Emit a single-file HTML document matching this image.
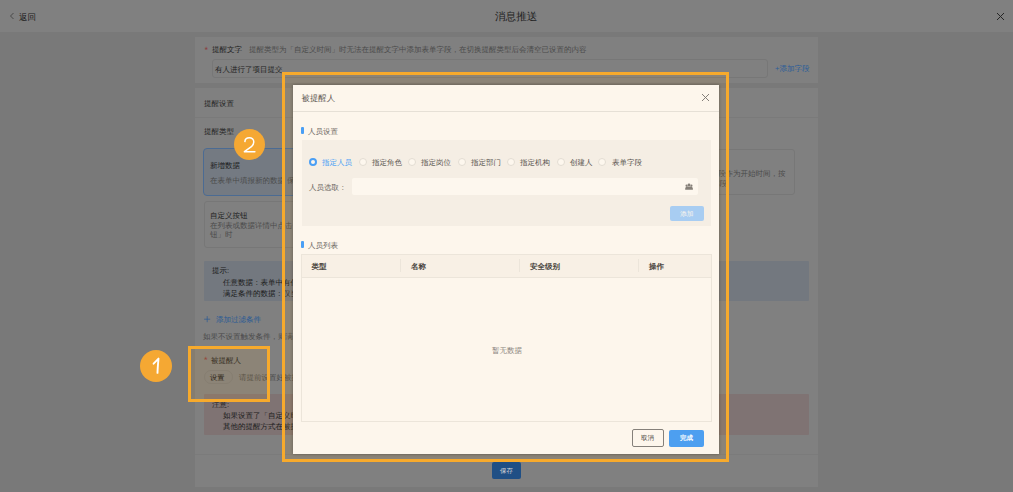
<!DOCTYPE html>
<html><head><meta charset="utf-8">
<style>
*{margin:0;padding:0;box-sizing:border-box}
html,body{width:1013px;height:492px;overflow:hidden;background:#797979;font-family:"Liberation Sans",sans-serif;text-rendering:geometricPrecision}
.a{position:absolute}
.t{position:absolute;white-space:nowrap;line-height:10px;height:10px;margin-top:1px}
.s{font-size:7.5px}
</style></head><body>
<!-- header -->
<div class="a" style="left:0;top:0;width:1013px;height:32px;background:#808080"></div>
<svg class="a" style="left:9px;top:12px" width="7" height="8" viewBox="0 0 7 8"><path d="M4.5 1 L1.5 4 L4.5 7" fill="none" stroke="#3a3a3a" stroke-width="0.8"/></svg>
<div class="t" style="left:19px;top:11px;font-size:8.5px;color:#1a1a1a">返回</div>
<div class="t" style="left:495px;top:11px;font-size:10.6px;color:#1e1e1e">消息推送</div>
<svg class="a" style="left:996px;top:12px" width="9" height="9" viewBox="0 0 9 9"><path d="M1 1 L8 8 M8 1 L1 8" stroke="#262626" stroke-width="1"/></svg>

<!-- card 1 -->
<div class="a" style="left:195px;top:37px;width:623px;height:46px;background:#808080"></div>
<div class="t" style="left:204.5px;top:44px;font-size:9px;color:#8c3a3a">*</div>
<div class="t s" style="left:212px;top:44px;color:#1e1e1e">提醒文字</div>
<div class="t s" style="left:249px;top:44px;color:#4a4a4a">提醒类型为「自定义时间」时无法在提醒文字中添加表单字段，在切换提醒类型后会清空已设置的内容</div>
<div class="a" style="left:212px;top:59px;width:556px;height:19px;border:1px solid #777777;border-radius:3px"></div>
<div class="t s" style="left:215px;top:64px;color:#1e1e1e">有人进行了项目提交</div>
<div class="t s" style="left:775px;top:63px;color:#2a5d9a">+添加字段</div>

<!-- card 2 -->
<div class="a" style="left:195px;top:88px;width:623px;height:399px;background:#808080"></div>
<div class="a" style="left:195px;top:117px;width:623px;height:1px;background:#7a7a7a"></div>
<div class="t s" style="left:204px;top:98px;color:#1e1e1e">提醒设置</div>
<div class="t s" style="left:204px;top:126px;color:#1e1e1e">提醒类型</div>

<!-- type cards -->
<div class="a" style="left:203px;top:148px;width:192px;height:48px;background:#747a82;border:1px solid #4b6b93;border-radius:4px"></div>
<div class="t s" style="left:210px;top:160px;color:#1a1a1a">新增数据</div>
<div class="t s" style="left:210px;top:175px;color:#4a4a4a">在表单中填报新的数据 保存后</div>
<div class="a" style="left:403px;top:148px;width:192px;height:47px;border:1px solid #777777;border-radius:3px"></div>
<div class="a" style="left:602px;top:149px;width:193px;height:46px;border:1px solid #777777;border-radius:3px"></div>
<div class="t s" style="left:658px;top:168px;color:#4a4a4a">以表单中的日期字段作为开始时间，按</div>
<div class="t s" style="left:712px;top:178px;color:#4a4a4a">字段</div>

<div class="a" style="left:204px;top:201px;width:191px;height:47px;border:1px solid #777777;border-radius:3px"></div>
<div class="t s" style="left:210px;top:210px;color:#1a1a1a">自定义按钮</div>
<div class="t s" style="left:210px;top:220px;color:#4a4a4a">在列表或数据详情中点击「按</div>
<div class="t s" style="left:210px;top:229px;color:#4a4a4a">钮」时</div>

<div class="a" style="left:204px;top:260.5px;width:605px;height:40.5px;background:#73787f;border-radius:1px"></div>
<div class="t s" style="left:212px;top:265px;color:#1a1a1a">提示:</div>
<div class="t s" style="left:223px;top:277px;color:#1a1a1a">任意数据：表单中有任意数据</div>
<div class="t s" style="left:223px;top:288px;color:#1a1a1a">满足条件的数据：仅当数据</div>

<svg class="a" style="left:203px;top:315px" width="8" height="8" viewBox="0 0 8 8"><path d="M1.1 4.2 H7.2 M4.2 1.1 V7.2" stroke="#2a5a95" stroke-width="0.7"/></svg>
<div class="t s" style="left:216px;top:314px;color:#2a5a95">添加过滤条件</div>
<div class="t s" style="left:203px;top:331px;color:#4a4a4a">如果不设置触发条件，则满足</div>

<div class="t" style="left:204px;top:354px;font-size:9px;color:#8c3a3a">*</div>
<div class="t s" style="left:211px;top:355px;color:#1e1e1e">被提醒人</div>
<div class="a" style="left:203.5px;top:369.5px;width:29px;height:14px;border:1px solid #7a7a7a;border-radius:7px"></div>
<div class="t" style="left:210px;top:372px;font-size:7.2px;color:#101010">设置</div>
<div class="t s" style="left:239px;top:372px;color:#4a4a4a">请提前设置好被提醒人</div>

<div class="a" style="left:204px;top:394px;width:605px;height:40.5px;background:#7f7373;border-radius:1px"></div>
<div class="t s" style="left:212px;top:399px;color:#1a1a1a">注意:</div>
<div class="t s" style="left:223px;top:410px;color:#1a1a1a">如果设置了「自定义时间」</div>
<div class="t s" style="left:223px;top:421px;color:#1a1a1a">其他的提醒方式在被提醒人</div>

<div class="a" style="left:195px;top:454px;width:623px;height:1px;background:#7b7b7b"></div>
<div class="a" style="left:492px;top:462px;width:29px;height:17px;background:#1f4f85;border-radius:2px"></div>
<div class="t" style="left:500px;top:466px;font-size:6.5px;color:#d8d8d8">保存</div>

<!-- annotation 1 -->
<div class="a" style="left:188px;top:346px;width:82px;height:56px;border:3px solid #f7aa2c;background:rgba(245,166,35,0.1)"></div>
<div class="a" style="left:140px;top:350px;width:32px;height:32px;border-radius:50%;background:#f5a833"></div>
<svg class="a" style="left:140px;top:350px" width="32" height="32" viewBox="0 0 32 32"><path d="M13.6 13.7 L18.5 8.6 C18.1 13 17.6 18 17.5 22.9" fill="none" stroke="#fff" stroke-width="1.9" stroke-linecap="round" stroke-linejoin="round"/></svg>

<!-- annotation 2 -->
<div class="a" style="left:282px;top:72px;width:447px;height:390px;border:3px solid #f7aa2c;background:rgba(245,166,35,0.1)"></div>

<!-- modal -->
<div class="a" style="left:293px;top:85px;width:426px;height:369px;background:#fdf6ec;box-shadow:0 0 3px rgba(0,0,0,0.3)"></div>
<div class="t" style="left:301.5px;top:92px;font-size:8.4px;color:#5a5550">被提醒人</div>
<svg class="a" style="left:701px;top:93px" width="9" height="9" viewBox="0 0 9 9"><path d="M1 1 L8 8 M8 1 L1 8" stroke="#77736d" stroke-width="0.9"/></svg>
<div class="a" style="left:293px;top:111px;width:426px;height:1px;background:#e6e0d6"></div>

<div class="a" style="left:301px;top:127px;width:2.5px;height:7px;background:#4a9ff5;border-radius:1px"></div>
<div class="t s" style="left:308px;top:126px;color:#6a6560">人员设置</div>

<div class="a" style="left:302px;top:140px;width:409px;height:86px;background:#f5eee4"></div>
<!-- radios -->
<div class="a" style="left:309px;top:158px;width:8px;height:8px;border-radius:50%;border:2.5px solid #4a9ff5;background:#fdf6ec"></div>
<div class="t s" style="left:322px;top:157px;color:#4a9ff5">指定人员</div>
<div class="a" style="left:358.5px;top:158px;width:8px;height:8px;border-radius:50%;border:1px solid #e3ddd3;background:#fdf7ee"></div>
<div class="t s" style="left:372px;top:157px;color:#5a5550">指定角色</div>
<div class="a" style="left:408px;top:158px;width:8px;height:8px;border-radius:50%;border:1px solid #e3ddd3;background:#fdf7ee"></div>
<div class="t s" style="left:421px;top:157px;color:#5a5550">指定岗位</div>
<div class="a" style="left:457.5px;top:158px;width:8px;height:8px;border-radius:50%;border:1px solid #e3ddd3;background:#fdf7ee"></div>
<div class="t s" style="left:471px;top:157px;color:#5a5550">指定部门</div>
<div class="a" style="left:507px;top:158px;width:8px;height:8px;border-radius:50%;border:1px solid #e3ddd3;background:#fdf7ee"></div>
<div class="t s" style="left:520px;top:157px;color:#5a5550">指定机构</div>
<div class="a" style="left:557px;top:158px;width:8px;height:8px;border-radius:50%;border:1px solid #e3ddd3;background:#fdf7ee"></div>
<div class="t s" style="left:570px;top:157px;color:#5a5550">创建人</div>
<div class="a" style="left:598px;top:158px;width:8px;height:8px;border-radius:50%;border:1px solid #e3ddd3;background:#fdf7ee"></div>
<div class="t s" style="left:612px;top:157px;color:#5a5550">表单字段</div>

<div class="t s" style="left:309px;top:182px;color:#6a6560">人员选取：</div>
<div class="a" style="left:352px;top:178px;width:346px;height:17px;background:#fdf7ee;border-radius:2px"></div>
<svg class="a" style="left:680px;top:178px" width="18" height="18" viewBox="0 0 18 18"><g fill="#857f78"><circle cx="9" cy="6.9" r="1.4"/><circle cx="6.6" cy="7.7" r="1.1"/><circle cx="11.4" cy="7.7" r="1.1"/><path d="M5.2 11.8 Q5 8.8 7 8.6 L11 8.6 Q13 8.8 12.9 11.8 Z"/></g></svg>

<div class="a" style="left:670px;top:206px;width:34px;height:15px;background:#a8cdf2;border-radius:2px"></div>
<div class="t" style="left:680px;top:209px;font-size:6.7px;color:#fdf6ec">添加</div>

<div class="a" style="left:301px;top:241px;width:2.5px;height:7px;background:#4a9ff5;border-radius:1px"></div>
<div class="t s" style="left:308px;top:240px;color:#6a6560">人员列表</div>

<!-- table -->
<div class="a" style="left:301px;top:254px;width:411px;height:168px;border:1px solid #ece5da;background:#fdf6ec"></div>
<div class="a" style="left:302px;top:255px;width:409px;height:22px;background:#f8f0e5"></div>
<div class="a" style="left:302px;top:277px;width:409px;height:1px;background:#ece5da"></div>
<div class="a" style="left:400px;top:259px;width:1px;height:13px;background:#ece5da"></div>
<div class="a" style="left:519px;top:259px;width:1px;height:13px;background:#ece5da"></div>
<div class="a" style="left:638px;top:259px;width:1px;height:13px;background:#ece5da"></div>
<div class="t s" style="left:311.5px;top:261px;color:#4a4540;font-weight:bold">类型</div>
<div class="t s" style="left:411px;top:261px;color:#4a4540;font-weight:bold">名称</div>
<div class="t s" style="left:530px;top:261px;color:#4a4540;font-weight:bold">安全级别</div>
<div class="t s" style="left:649px;top:261px;color:#4a4540;font-weight:bold">操作</div>
<div class="t s" style="left:492px;top:344.5px;color:#8a8580">暂无数据</div>

<!-- footer buttons -->
<div class="a" style="left:632px;top:429px;width:32px;height:18px;border:1px solid #85807a;border-radius:2px;background:#fdf6ec"></div>
<div class="t" style="left:641px;top:433px;font-size:6.5px;color:#4a4540">取消</div>
<div class="a" style="left:669px;top:430px;width:35px;height:17px;background:#4d9ff0;border-radius:2px"></div>
<div class="t" style="left:680px;top:433px;font-size:6.5px;color:#ffffff;font-weight:bold">完成</div>

<!-- circle 2 -->
<div class="a" style="left:233.5px;top:129px;width:31px;height:31px;border-radius:50%;background:#f5a833"></div>
<svg class="a" style="left:233.5px;top:129px" width="31" height="31" viewBox="0 0 31 31"><path d="M10.9 12.6 C11 10.2 12.9 8.7 15.3 8.7 C17.9 8.7 19.8 10.5 19.8 13 C19.8 14.9 18.8 16.3 17.4 17.7 L10.4 22.7 L20.9 22.7" fill="none" stroke="#fff" stroke-width="1.5" stroke-linecap="round" stroke-linejoin="round"/></svg>
</body></html>
